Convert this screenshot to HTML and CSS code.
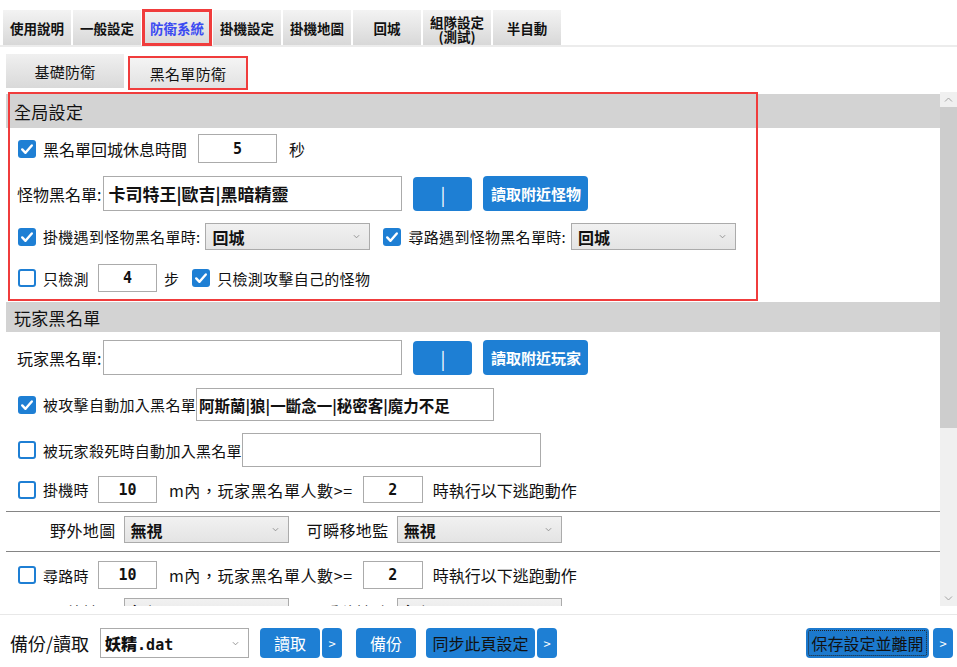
FILE: index.html
```html
<!DOCTYPE html>
<html lang="zh-Hant">
<head>
    <meta charset="UTF-8">
    <meta name="viewport" content="width=device-width, initial-scale=1.0">
    <title>防衛系統 - 黑名單防衛</title>
    <link rel="stylesheet" href="styles.css">
</head>
<body>
    <div class="tabs">
        <div class="tab">使用說明</div>
        <div class="tab">一般設定</div>
        <div class="tab active">防衛系統</div>
        <div class="tab">掛機設定</div>
        <div class="tab">掛機地圖</div>
        <div class="tab">回城</div>
        <div class="tab two-line">組隊設定<br>(測試)</div>
        <div class="tab">半自動</div>
    </div>

    <div class="subtabs">
        <div class="subtab">基礎防衛</div>
        <div class="subtab current">黑名單防衛</div>
    </div>

    <div class="panel">
        <div class="panel-body">
            <div class="highlight"></div>

            <!-- 全局設定 -->
            <div class="section-title first">全局設定</div>
            <div class="row r-rest">
                <span class="cb"><svg viewBox="0 0 18 18"><path d="M4.2 9.4l3.3 3.4 6.3-7.3"/></svg></span>
                <span class="lbl lg">黑名單回城休息時間</span>
                <input class="field num w-rest" value="5">
                <span class="lbl lg unit">秒</span>
            </div>
            <div class="row r-monster">
                <span class="lbl lg">怪物黑名單:</span>
                <input class="field list w-list" value="卡司特王|歐吉|黑暗精靈">
                <button class="btn bar">|</button>
                <button class="btn near">讀取附近怪物</button>
            </div>
            <div class="row r-meet">
                <span class="cb"><svg viewBox="0 0 18 18"><path d="M4.2 9.4l3.3 3.4 6.3-7.3"/></svg></span>
                <span class="lbl">掛機遇到怪物黑名單時:</span>
                <div class="select s-meet">回城<svg viewBox="0 0 8 5"><path d="M1 1l3 3 3-3"/></svg></div>
                <span class="cb cb-gap"><svg viewBox="0 0 18 18"><path d="M4.2 9.4l3.3 3.4 6.3-7.3"/></svg></span>
                <span class="lbl">尋路遇到怪物黑名單時:</span>
                <div class="select s-meet">回城<svg viewBox="0 0 8 5"><path d="M1 1l3 3 3-3"/></svg></div>
            </div>
            <div class="row r-steps">
                <span class="cb off"></span>
                <span class="lbl">只檢測</span>
                <input class="field num w-steps" value="4">
                <span class="lbl unit">步</span>
                <span class="cb cb-near"><svg viewBox="0 0 18 18"><path d="M4.2 9.4l3.3 3.4 6.3-7.3"/></svg></span>
                <span class="lbl">只檢測攻擊自己的怪物</span>
            </div>

            <!-- 玩家黑名單 -->
            <div class="section-title">玩家黑名單</div>
            <div class="row r-player">
                <span class="lbl lg">玩家黑名單:</span>
                <input class="field list w-list" value="">
                <button class="btn bar">|</button>
                <button class="btn near">讀取附近玩家</button>
            </div>
            <div class="row r-attacked">
                <span class="cb"><svg viewBox="0 0 18 18"><path d="M4.2 9.4l3.3 3.4 6.3-7.3"/></svg></span>
                <span class="lbl">被攻擊自動加入黑名單</span>
                <input class="field list sm w-attacked" value="阿斯蘭|狼|一斷念一|秘密客|魔力不足">
            </div>
            <div class="row r-killed">
                <span class="cb off"></span>
                <span class="lbl">被玩家殺死時自動加入黑名單</span>
                <input class="field list sm w-killed" value="">
            </div>
            <div class="row r-flee">
                <span class="cb off"></span>
                <span class="lbl">掛機時</span>
                <input class="field num w-dist" value="10">
                <span class="lbl lg unit cond">m內，玩家黑名單人數&gt;=</span>
                <input class="field num w-count" value="2">
                <span class="lbl lg unit act">時執行以下逃跑動作</span>
            </div>
            <div class="rule"></div>
            <div class="row r-map">
                <span class="lbl lg">野外地圖</span>
                <div class="select s-map">無視<svg viewBox="0 0 8 5"><path d="M1 1l3 3 3-3"/></svg></div>
                <span class="lbl lg map-gap">可瞬移地監</span>
                <div class="select s-map">無視<svg viewBox="0 0 8 5"><path d="M1 1l3 3 3-3"/></svg></div>
            </div>
            <div class="rule"></div>
            <div class="row r-flee path">
                <span class="cb off"></span>
                <span class="lbl">尋路時</span>
                <input class="field num w-dist" value="10">
                <span class="lbl lg unit cond">m內，玩家黑名單人數&gt;=</span>
                <input class="field num w-count" value="2">
                <span class="lbl lg unit act">時執行以下逃跑動作</span>
            </div>
            <div class="row r-map">
                <span class="lbl lg">野外地圖</span>
                <div class="select s-map">無視<svg viewBox="0 0 8 5"><path d="M1 1l3 3 3-3"/></svg></div>
                <span class="lbl lg map-gap">可瞬移地監</span>
                <div class="select s-map">無視<svg viewBox="0 0 8 5"><path d="M1 1l3 3 3-3"/></svg></div>
            </div>
        </div>

        <div class="scrollbar">
            <div class="sb-btn"><svg viewBox="0 0 9 5"><path d="M1 4.5l3.5-3.5 3.5 3.5"/></svg></div>
            <div class="sb-thumb"></div>
            <div class="sb-track"></div>
            <div class="sb-btn"><svg viewBox="0 0 9 5"><path d="M1 0.5l3.5 3.5 3.5-3.5"/></svg></div>
        </div>
    </div>

    <div class="footer">
        <span class="footer-label">備份/讀取</span>
        <div class="select file"><span><b>妖精</b><span class="mono">.dat</span></span><svg viewBox="0 0 8 5"><path d="M1 1l3 3 3-3"/></svg></div>
        <button class="btn fbtn load">讀取</button>
        <button class="btn fbtn more">&gt;</button>
        <button class="btn fbtn backup">備份</button>
        <button class="btn fbtn sync">同步此頁設定</button>
        <button class="btn fbtn more">&gt;</button>
        <div class="footer-right">
            <button class="btn fbtn save">保存設定並離開</button>
            <button class="btn fbtn more">&gt;</button>
        </div>
    </div>
</body>
</html>
```

FILE: styles.css
```css
:root {
    --blue: #1e7fd4;
    --field-border: #ababab;
    --header-gray: #d3d3d3;
    --red: #f03c3c;
}

* {
    margin: 0;
    padding: 0;
    box-sizing: border-box;
}

body {
    width: 957px;
    height: 667px;
    overflow: hidden;
    background: #fff;
    color: #111;
    font-family: "Noto Sans CJK TC", "Noto Sans", sans-serif;
}

/* top tabs */
.tabs {
    display: flex;
    gap: 2px;
    padding: 10px 0 0 3px;
    border-bottom: 2px solid #ececec;
}

.tab {
    width: 68px;
    height: 35px;
    display: flex;
    align-items: center;
    justify-content: center;
    text-align: center;
    font-size: 13.5px;
    font-weight: bold;
    background: linear-gradient(#f3f3f3, #d8d8d8);
}

.tab.two-line {
    line-height: 14px;
    padding-top: 2px;
}

.tab.active {
    color: #3b4bf2;
    outline: 3px solid var(--red);
    outline-offset: -2px;
}

/* sub tabs */
.subtabs {
    display: flex;
    align-items: flex-start;
    gap: 4px;
    height: 36px;
    margin: 7px 0 2px;
    padding-left: 6px;
}

.subtab {
    width: 118px;
    height: 34px;
    display: flex;
    align-items: center;
    justify-content: center;
    font-size: 15px;
    letter-spacing: 0.3px;
    background: linear-gradient(#f0f0f0, #d9d9d9);
}

.subtab.current {
    width: 120px;
    margin-top: 2px;
    border: 2px solid var(--red);
    background: linear-gradient(#f4f4f4, #e2e2e2);
}

/* scrolling panel */
.panel {
    display: flex;
    height: 514px;
}

.panel-body {
    flex: 1;
    position: relative;
    overflow: hidden;
    padding-left: 6px;
}

.highlight {
    position: absolute;
    left: 8px;
    top: 0;
    width: 750px;
    height: 209px;
    border: 2px solid var(--red);
    pointer-events: none;
    z-index: 2;
}

.section-title {
    height: 30px;
    margin-top: 10px;
    padding-left: 8px;
    display: flex;
    align-items: center;
    font-size: 17px;
    letter-spacing: 0.3px;
    background: var(--header-gray);
}

.section-title.first {
    height: 34px;
    margin-top: 2px;
}

.row {
    display: flex;
    align-items: center;
    padding-left: 12px;
}

.lbl {
    font-size: 15px;
    letter-spacing: 0.3px;
    white-space: nowrap;
}

.lbl.lg {
    font-size: 16px;
    letter-spacing: 0;
}

.cb {
    width: 18px;
    height: 18px;
    flex-shrink: 0;
    margin-right: 7px;
    border-radius: 3px;
    background: var(--blue);
    display: flex;
}

.cb svg {
    width: 18px;
    height: 18px;
    fill: none;
    stroke: #fff;
    stroke-width: 2.4;
    stroke-linecap: round;
    stroke-linejoin: round;
}

.cb.off {
    background: #fff;
    border: 2px solid var(--blue);
}

.field {
    border: 1px solid var(--field-border);
    background: #fff;
    color: #111;
    font-family: inherit;
    outline: none;
}

.field.num {
    text-align: center;
    font-family: "DejaVu Sans Mono", monospace;
    font-size: 15px;
    font-weight: bold;
}

.field.list {
    padding-left: 4px;
    font-size: 17px;
    font-weight: bold;
}

.field.list.sm {
    font-size: 15.5px;
    padding-left: 2px;
}

.unit {
    margin-left: 12px;
}

.btn {
    border: none;
    border-radius: 4px;
    background: var(--blue);
    color: #fff;
    font-family: inherit;
    font-weight: bold;
}

.btn.bar {
    width: 59px;
    height: 34px;
    margin-left: 11px;
    font-size: 18px;
    font-weight: normal;
}

.btn.near {
    width: 105px;
    height: 35px;
    margin-left: 11px;
    font-size: 15px;
}

.select {
    display: flex;
    align-items: center;
    justify-content: space-between;
    padding: 0 9px 0 6px;
    border: 1px solid var(--field-border);
    background: linear-gradient(#f1f1f1, #e4e4e4);
    font-size: 16px;
    font-weight: bold;
}

.select svg {
    width: 7px;
    height: 5px;
    fill: none;
    stroke: #8a8a8a;
    stroke-width: 1;
}

/* row placement */
.r-rest { margin-top: 6px; height: 29px; }
.w-rest { width: 79px; height: 29px; margin-left: 11px; }

.r-monster { margin-top: 13px; height: 35px; padding-left: 11px; }
.w-list { width: 299px; height: 35px; margin-left: 2px; }

.r-meet { margin-top: 12px; height: 27px; }
.s-meet { width: 165px; height: 27px; margin-left: 5px; }
.cb-gap { margin-left: 13px; }

.r-steps { margin-top: 14px; height: 28px; }
.w-steps { width: 59px; height: 28px; margin-left: 9px; }
.r-steps .unit { margin-left: 7px; }
.cb-near { margin-left: 13px; }

.r-player { margin-top: 8px; height: 35px; padding-left: 11px; }

.r-attacked { margin-top: 13px; height: 33px; }
.w-attacked { width: 298px; height: 33px; margin-left: 0; }

.r-killed { margin-top: 12px; height: 34px; }
.w-killed { width: 299px; height: 34px; margin-left: 0; }

.r-flee { margin-top: 9px; height: 27px; }
.r-flee.path { margin-top: 9px; height: 28px; }
.w-dist { width: 59px; height: 100%; margin-left: 9px; }
.w-count { width: 60px; height: 100%; margin-left: 10px; }
.lbl.cond { letter-spacing: 0.6px; }
.unit.act { margin-left: 10px; }

.rule {
    height: 1px;
    margin-top: 8px;
    background: #858585;
}

.r-map { margin-top: 4px; height: 27px; padding-left: 44px; }
.r-map .lbl { letter-spacing: 0.4px; }
.s-map { width: 165px; height: 27px; margin-left: 8px; }
.map-gap { margin-left: 18px; }

.r-flee + .r-map { margin-top: 9px; }

/* scrollbar */
.scrollbar {
    width: 17px;
    display: flex;
    flex-direction: column;
    background: #f0f0f0;
}

.sb-btn {
    height: 15px;
    display: flex;
    align-items: center;
    justify-content: center;
}

.sb-btn svg {
    width: 9px;
    height: 5px;
    fill: none;
    stroke: #a3a3a3;
    stroke-width: 1;
}

.sb-thumb {
    height: 321px;
    background: #cdcdcd;
}

.sb-track {
    flex: 1;
}

/* footer */
.footer {
    display: flex;
    align-items: center;
    margin-top: 8px;
    padding: 13px 4px 0 10px;
    border-top: 1px solid #e8e8e8;
}

.footer-label {
    font-size: 18px;
}

.select.file {
    width: 149px;
    height: 30px;
    margin-left: 11px;
    background: #fff;
    padding-left: 4px;
}

.select.file b {
    font-size: 16px;
}

.mono {
    font-family: "DejaVu Sans Mono", monospace;
    font-size: 15px;
}

.fbtn {
    height: 30px;
    font-size: 16px;
    font-weight: normal;
}

.fbtn.load { width: 60px; margin-left: 11px; }
.fbtn.more { width: 20px; margin-left: 2px; font-size: 13px; }
.fbtn.backup { width: 60px; margin-left: 14px; }
.fbtn.sync { width: 109px; margin-left: 10px; color: #111; }

.footer-right {
    display: flex;
    margin-left: auto;
}

.fbtn.save {
    width: 123px;
    color: #111;
    background: #1c79cd;
    outline: 1px dotted #222;
    outline-offset: -3px;
}

.footer-right .more { margin-left: 4px; }
```
